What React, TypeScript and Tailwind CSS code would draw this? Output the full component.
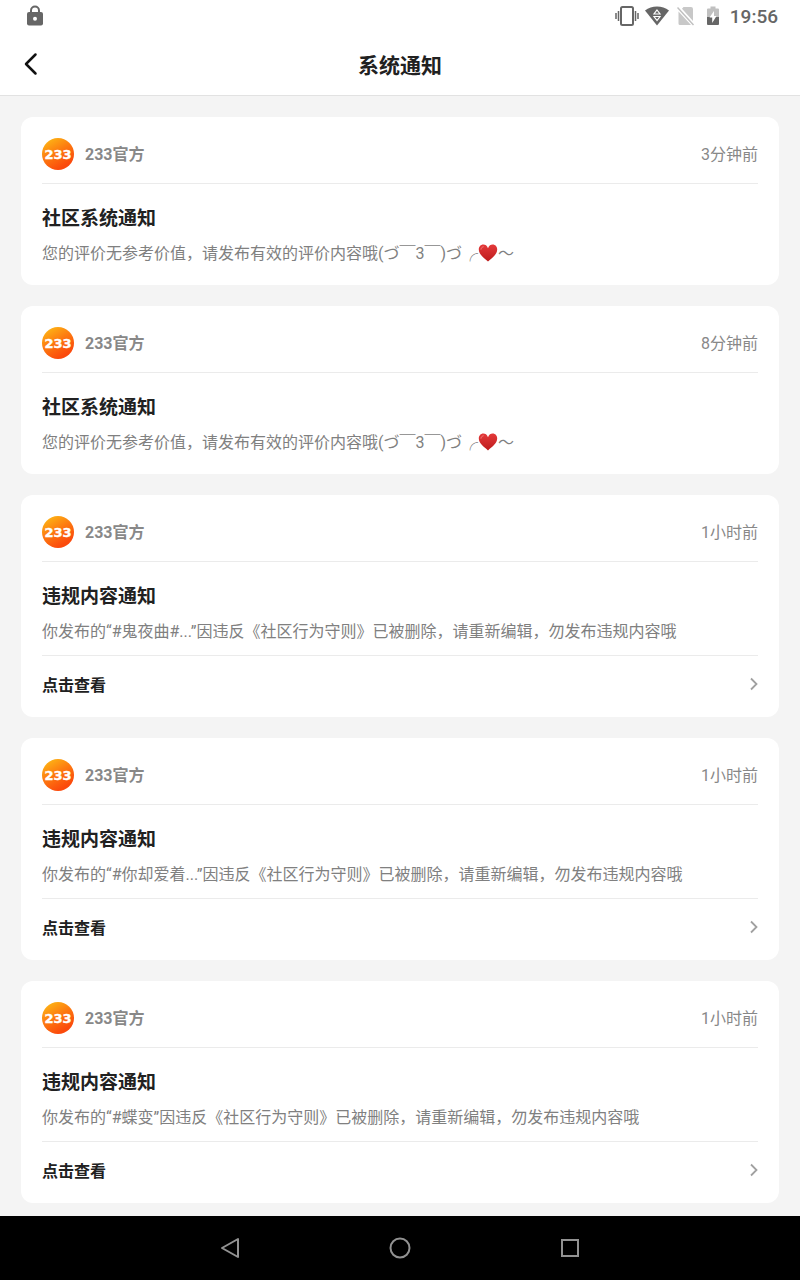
import React from 'react';

interface Notice {
    id: number;
    time: string;
    title: string;
    content: React.ReactNode;
    link?: string;
}

const Heart: React.FC = () => (
    <svg role="img" aria-label="❤" viewBox="0 0 20 18" className="inline-block w-5 h-[18px] align-[-3px]">
        <defs>
            <linearGradient id="heart" x1="0" y1="0" x2="0" y2="1">
                <stop offset="0" stopColor="#e4393a" />
                <stop offset="1" stopColor="#bd1c1c" />
            </linearGradient>
        </defs>
        <path
            d="M10 4.2C9 1.6 7.300.5 5.400.5 2.600.5.800 2.700.800 5.600c0 5 5.400 8.400 9.200 11.900 3.800-3.500 9.200-6.900 9.200-11.900C19.200 2.700 17.400.5 14.600.5 12.700.5 11 1.600 10 4.200z"
            fill="url(#heart)"
        />
        <path d="M3 5.200c.2-1.300 1-2.200 2.200-2.400" fill="none" stroke="#f4807c" strokeWidth="1" strokeLinecap="round" />
    </svg>
);

const reviewContent = (
    <>
        您的评价无参考价值，请发布有效的评价内容哦(づ￣3￣)づ╭<Heart />～
    </>
);

const notices: Notice[] = [
    { id: 1, time: '3分钟前', title: '社区系统通知', content: reviewContent },
    { id: 2, time: '8分钟前', title: '社区系统通知', content: reviewContent },
    {
        id: 3,
        time: '1小时前',
        title: '违规内容通知',
        content: '你发布的“#鬼夜曲#...”因违反《社区行为守则》已被删除，请重新编辑，勿发布违规内容哦',
        link: '点击查看',
    },
    {
        id: 4,
        time: '1小时前',
        title: '违规内容通知',
        content: '你发布的“#你却爱着...”因违反《社区行为守则》已被删除，请重新编辑，勿发布违规内容哦',
        link: '点击查看',
    },
    {
        id: 5,
        time: '1小时前',
        title: '违规内容通知',
        content: '你发布的“#蝶变”因违反《社区行为守则》已被删除，请重新编辑，勿发布违规内容哦',
        link: '点击查看',
    },
];

const StatusBar: React.FC = () => (
    <div className="h-8 pl-[27px] pr-[22px] flex items-center justify-between text-[#666666]">
        <svg viewBox="0 0 16 21" className="w-4 h-[21px] mb-0.5">
            <path d="M4 8V5.500a4 4 0 0 1 8 0V8" fill="none" stroke="currentColor" strokeWidth="2" />
            <rect x="0" y="7" width="16" height="13.500" rx="2" fill="currentColor" />
            <circle cx="8" cy="13.700" r="2" fill="#ffffff" />
        </svg>
        <div className="flex items-center">
            <svg viewBox="0 0 24 20" className="w-6 h-5 mr-1.5">
                <g fill="none" stroke="currentColor">
                    <rect x="6" y="1" width="12" height="18" rx="1.500" strokeWidth="2" />
                    <path d="M3.500 5v10M20.500 5v10" strokeWidth="1.500" />
                    <path d="M1 7v6M23 7v6" strokeWidth="1.500" />
                </g>
            </svg>
            <svg viewBox="0 0 24 20" className="w-6 h-5 mr-2">
                <path d="M0 4.500C3.500 1.800 7.500.5 12 .5s8.500 1.300 12 4L12 19.500z" fill="currentColor" />
                <path d="M12 4l3 4H9zM12 14.500l-3-4h6z" fill="none" stroke="#ffffff" strokeWidth="1.200" />
            </svg>
            <svg viewBox="0 0 18 20" className="w-[18px] h-5 mr-3">
                <path d="M6.500 1H14a2 2 0 0 1 2 2v12L5 2.800zM1.500 5.500L14 19H3a1.500 1.500 0 0 1-1.500-1.500z" fill="#c8c8c8" />
                <path d="M.5 1.500l16 17.500" stroke="#c0c0c0" strokeWidth="1.500" />
            </svg>
            <svg viewBox="0 0 12 20" className="w-3 h-5 mr-[11px]">
                <path d="M3.500.5h5V2.500H11q1 0 1 1V11H0V3.500q0-1 1-1h2.500z" fill="#c0c0c0" />
                <path d="M0 11h12v7q0 1-1 1H1q-1 0-1-1z" fill="currentColor" />
                <path d="M7 5L2.500 11.500H5.200V17L9.500 10H7z" fill="#ffffff" />
            </svg>
            <span className="text-[19px] leading-6 pt-0.5 font-medium">19:56</span>
        </div>
    </div>
);

const Avatar: React.FC = () => (
    <svg role="img" aria-label="233" viewBox="0 0 32 32" className="w-8 h-8">
        <defs>
            <linearGradient id="avatar" x1="0.15" y1="0.05" x2="0.65" y2="0.9">
                <stop offset="0" stopColor="#fdb515" />
                <stop offset="0.5" stopColor="#fd7a10" />
                <stop offset="1" stopColor="#fb4a0c" />
            </linearGradient>
        </defs>
        <circle cx="16" cy="16" r="16" fill="url(#avatar)" />
        <text
            x="16"
            y="21"
            textAnchor="middle"
            fill="#ffffff"
            stroke="#ffffff"
            strokeWidth="0.4"
            className="text-[13px] font-bold font-['DejaVu_Sans']"
        >
            233
        </text>
    </svg>
);

const NoticeCard: React.FC<{ notice: Notice }> = ({ notice }) => (
    <article className="bg-white rounded-xl px-[21px]">
        <header className="h-[67px] pt-2 border-b border-[#ebebeb] flex items-center text-base text-[#888888]">
            <Avatar />
            <span className="ml-[11px] pt-0.5 font-bold">233官方</span>
            <time className="ml-auto pt-0.5">{notice.time}</time>
        </header>
        <h2 className="mt-[22px] text-[19px] leading-[26px] font-bold">{notice.title}</h2>
        <p className={`mt-2.5 text-base leading-6 text-[#808080] ${notice.link ? 'pb-[11px]' : 'pb-[19px]'}`}>{notice.content}</p>
        {notice.link && (
            <a href="#" className="h-[62px] pb-0.5 border-t border-[#ebebeb] flex items-center justify-between text-base font-bold">
                {notice.link}
                <svg viewBox="0 0 8 14" className="w-2 h-3.5 mb-1">
                    <path d="M1 1.500l5.500 5.500L1 12.500" fill="none" stroke="#a0a0a0" strokeWidth="1.800" />
                </svg>
            </a>
        )}
    </article>
);

const NavBar: React.FC = () => (
    <nav className="sticky bottom-0 h-16 bg-black flex items-center justify-center gap-[146px]">
        <button type="button" aria-label="返回">
            <svg viewBox="0 0 24 24" className="w-6 h-6" fill="none" stroke="#929292" strokeWidth="2">
                <path d="M20 3v18L4 12z" strokeLinejoin="round" />
            </svg>
        </button>
        <button type="button" aria-label="主屏幕">
            <svg viewBox="0 0 24 24" className="w-6 h-6" fill="none" stroke="#929292" strokeWidth="2">
                <circle cx="12" cy="12" r="9.500" />
            </svg>
        </button>
        <button type="button" aria-label="最近任务">
            <svg viewBox="0 0 24 24" className="w-6 h-6" fill="none" stroke="#929292" strokeWidth="2">
                <rect x="4" y="4" width="16" height="16" />
            </svg>
        </button>
    </nav>
);

const App: React.FC = () => {
    return (
        <div className="min-h-screen flex flex-col bg-[#f4f4f4] text-[#212121] font-[Roboto,'Noto_Sans_CJK_SC',sans-serif]">
            <div className="bg-white border-b border-[#e2e2e2]">
                <StatusBar />
                <header className="h-[63px] px-[21px] grid grid-cols-[40px_1fr_40px] items-center">
                    <button type="button" aria-label="返回" className="h-10">
                        <svg viewBox="0 0 20 24" className="w-5 h-6" fill="none" stroke="#111111" strokeWidth="2.500">
                            <path d="M14.500 2.500L5 12l9.500 9.500" strokeLinecap="round" strokeLinejoin="round" />
                        </svg>
                    </button>
                    <h1 className="pt-1 text-[21px] leading-8 font-bold text-center">系统通知</h1>
                </header>
            </div>
            <main className="flex-1 px-[21px] pt-[21px] pb-[13px] flex flex-col gap-[21px]">
                {notices.map(notice => (
                    <NoticeCard key={notice.id} notice={notice} />
                ))}
            </main>
            <NavBar />
        </div>
    );
};

export default App;
